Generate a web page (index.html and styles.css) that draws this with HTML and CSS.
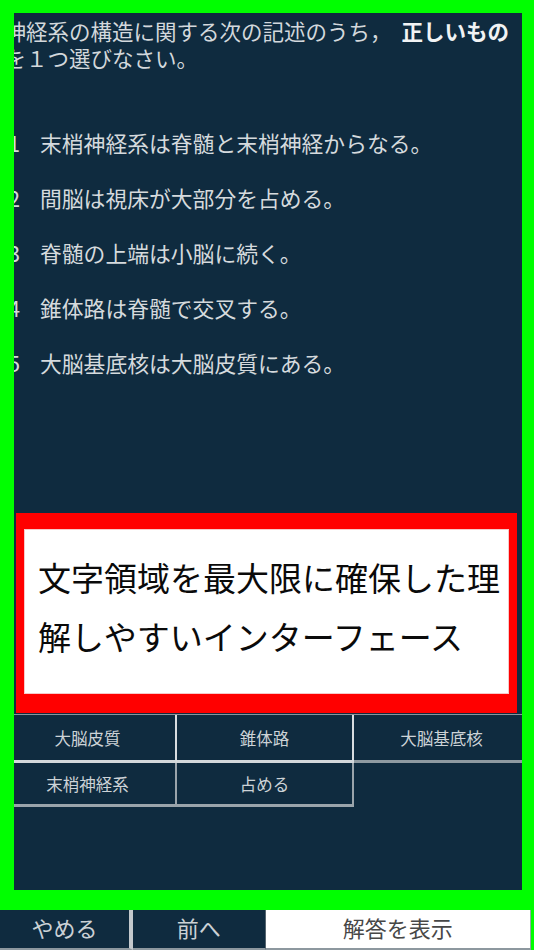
FILE: index.html
```html
<!DOCTYPE html>
<html lang="ja">
<head>
<meta charset="utf-8">
<title>問題</title>
<link rel="stylesheet" href="styles.css">
</head>
<body>
<div class="screen">
  <main class="panel">
    <div class="content">
      <p class="question">神経系の構造に関する次の記述のうち，<strong>正しいもの</strong><br>を１つ選びなさい。</p>
      <ol class="options">
        <li><span class="num">1</span><span class="opt-text">末梢神経系は脊髄と末梢神経からなる。</span></li>
        <li><span class="num">2</span><span class="opt-text">間脳は視床が大部分を占める。</span></li>
        <li><span class="num">3</span><span class="opt-text">脊髄の上端は小脳に続く。</span></li>
        <li><span class="num">4</span><span class="opt-text">錐体路は脊髄で交叉する。</span></li>
        <li><span class="num">5</span><span class="opt-text">大脳基底核は大脳皮質にある。</span></li>
      </ol>
      <div class="choices">
        <div class="choice">大脳皮質</div>
        <div class="choice">錐体路</div>
        <div class="choice">大脳基底核</div>
        <div class="choice">末梢神経系</div>
        <div class="choice">占める</div>
      </div>
    </div>
    <div class="callout">
      <div class="callout-inner">文字領域を最大限に確保した理<br>解しやすいインターフェース</div>
    </div>
  </main>
  <nav class="actions">
    <div class="act act-quit">やめる</div>
    <div class="act act-prev">前へ</div>
    <div class="act act-answer">解答を表示</div>
  </nav>
</div>
</body>
</html>
```

FILE: styles.css
```css
body {
  margin: 0;
  background: #00ff00;
  font-family: "Noto Sans CJK JP", "Noto Sans", sans-serif;
}

.screen {
  width: 534px;
  height: 950px;
  overflow: hidden;
}

.panel {
  position: relative;
  margin: 13px 12px 0 14px;
  height: 877px;
  background: #0f2b3f;
  overflow: hidden;
}

.content {
  margin-left: -14px;
  width: 531px;
}

.question {
  margin: 0;
  padding: 4px 0 0 4.5px;
  font-size: 21.5px;
  line-height: 27px;
  color: #d3d8dc;
  white-space: nowrap;
}

.question strong {
  margin-left: 10px;
  font-weight: 700;
  color: #f1f3f4;
}

.options {
  list-style: none;
  margin: 44px 0 0;
  padding: 0;
}

.options li {
  display: flex;
  align-items: center;
  height: 55px;
  font-size: 21.8px;
  color: #d5dadd;
}

.num {
  width: 32px;
  padding-left: 8px;
}

.choices {
  margin-top: 324px;
  display: grid;
  grid-template-columns: repeat(3, 177px);
  border-top: 1px solid #8a959c;
}

.choice {
  box-sizing: border-box;
  height: 48px;
  display: flex;
  align-items: center;
  justify-content: center;
  font-size: 16.5px;
  color: #cdd3d7;
  border-right: 2px solid #d8dde0;
  border-bottom: 3px solid #d3d8db;
}

.choice:nth-child(3) {
  border-bottom-color: #8f9aa1;
}

.choice:nth-child(n+4) {
  height: 44px;
  border-right-color: #9aa4ab;
  border-bottom-color: #9aa4ab;
}

.callout {
  position: absolute;
  left: 2px;
  top: 500px;
  width: 501px;
  height: 200px;
  box-sizing: border-box;
  border-style: solid;
  border-color: #ff0000;
  border-width: 16px 8px 19px 8px;
  background: #ffffff;
}

.callout-inner {
  box-sizing: border-box;
  height: 100%;
  border: 1px solid #f6c9c9;
  padding: 18px 0 0 13px;
  font-size: 33px;
  line-height: 59px;
  color: #0a0a0a;
  white-space: nowrap;
}

.actions {
  display: flex;
  width: 531px;
  height: 40px;
  margin-top: 20px;
}

.act {
  box-sizing: border-box;
  height: 40px;
  line-height: 34px;
  font-size: 22px;
  text-align: center;
  background: #0f2b3f;
  color: #cbd1d5;
  border-bottom: 2px solid #8d989f;
}

.act-quit {
  width: 133px;
  border-right: 4px solid #c3c9cd;
}

.act-prev {
  width: 132.5px;
  border-right: 1px solid #56656f;
}

.act-answer {
  flex: 1;
  background: #ffffff;
  color: #474747;
  border-right: 1px solid #9aa4ab;
}
```
